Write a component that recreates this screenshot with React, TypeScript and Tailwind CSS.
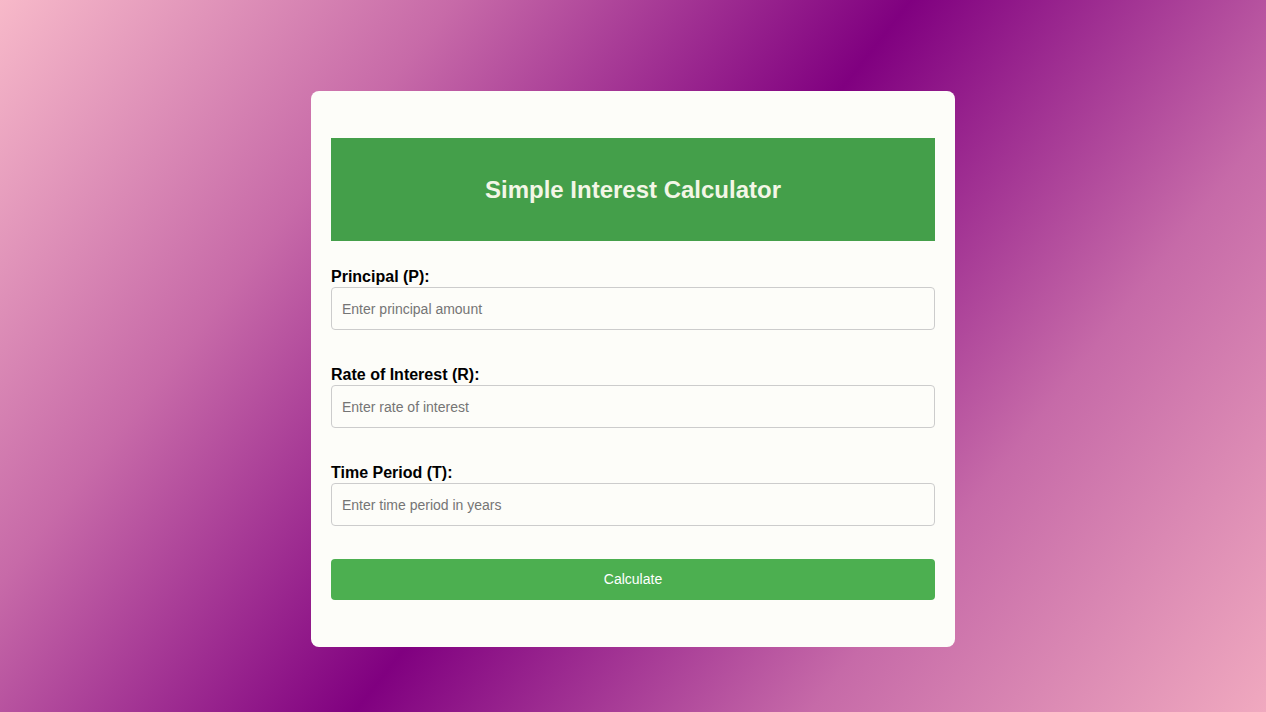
const fields = [
  { label: "Principal (P):", placeholder: "Enter principal amount" },
  { label: "Rate of Interest (R):", placeholder: "Enter rate of interest" },
  { label: "Time Period (T):", placeholder: "Enter time period in years" },
];

const font = { fontFamily: '"Liberation Sans", Arial, sans-serif' };

export default function App() {
  return (
    <div
      className="w-full h-[712px] flex items-start justify-center pt-[91px] bg-[linear-gradient(128deg,#f7b9c9_0%,#c76aa8_25%,#800080_50%,#c66aa8_75%,#f0a9bf_100%)]"
      style={font}
    >
      <div className="w-[644px] h-[556px] bg-[#fdfdf9] rounded-lg px-5 pt-[47px] flex flex-col">
        <div className="h-[103px] bg-[#449f4a] flex items-center justify-center">
          <h1 className="text-[24px] font-bold text-[#f3f6e6] leading-none">
            Simple Interest Calculator
          </h1>
        </div>

        <form className="flex flex-col pt-[26px]">
          {fields.map((f, i) => (
            <div key={i} className={i < 2 ? "flex flex-col mb-[35px]" : "flex flex-col mb-[33px]"}>
              <label className="text-[16px] font-bold text-black leading-[20px]">
                {f.label}
              </label>
              <input
                type="text"
                placeholder={f.placeholder}
                className="h-[43px] w-full border border-[#cccccc] rounded bg-[#fdfdf9] px-[10px] text-[14px] placeholder:text-[#757575] outline-none"
                style={font}
              />
            </div>
          ))}
          <button
            type="button"
            className="h-[41px] w-full bg-[#4caf50] rounded text-white text-[14px]"
            style={font}
          >
            Calculate
          </button>
        </form>
      </div>
    </div>
  );
}
